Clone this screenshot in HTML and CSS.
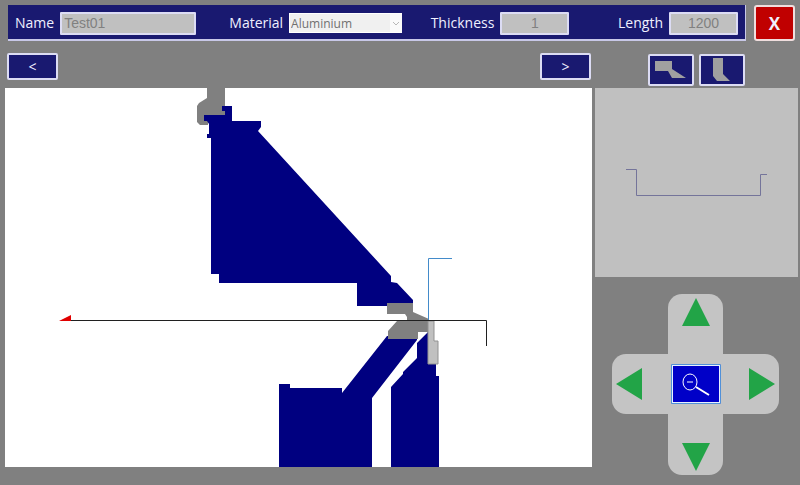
FILE: index.html
```html
<!DOCTYPE html>
<html lang="en">
<head>
<meta charset="utf-8">
<title>Bend profile</title>
<link rel="stylesheet" href="styles.css">
</head>
<body>
<header class="top">
  <form class="bar">
    <div class="field">
      <label for="name">Name</label>
      <input class="box wide" id="name" type="text" value="Test01" disabled>
    </div>
    <div class="field">
      <label for="material">Material</label>
      <span class="picker">
        <select id="material" disabled><option>Aluminium</option></select>
        <svg class="chevron" viewBox="0 0 12 18" aria-hidden="true"><path d="M3 8l3 3 3-3"/></svg>
      </span>
    </div>
    <div class="field">
      <label for="thickness">Thickness</label>
      <input class="box number" id="thickness" type="text" value="1" disabled>
    </div>
    <div class="field">
      <label for="length">Length</label>
      <input class="box number" id="length" type="text" value="1200" disabled>
    </div>
  </form>
  <button class="close" type="button">X</button>
</header>
<main class="work">
  <section class="left">
    <nav class="steps">
      <button class="btn step" type="button">&lt;</button>
      <button class="btn step" type="button">&gt;</button>
    </nav>
    <svg class="stage" viewBox="5 88 587 379" role="img" aria-label="Bending tools and sheet">
      <path class="clamp" d="M207 88H225V116H208V125H200L197 122V106L199 103L207 98Z"/>
      <path class="tool" d="M222 106H232V121H261V127L258 131L391 276V282L397 283L413 300V306H357V283H219V274H211V138H207V134H209V124L207 121H204V115H225V111H222Z"/>
      <path class="tool" d="M279 384H290V388H342V393L387 336H417V340L372 398V467H279Z"/>
      <path class="tool" d="M428 332V363H436V376H439V467H391V387L403 374V372L417 358V343Z"/>
      <path class="clamp" d="M387 303H413V312L429 319V332H418V339H388V331L397 321H407V317L405 314H387Z"/>
      <path class="plate" d="M428 321H434V341H438V364H428Z"/>
      <path class="fold" d="M428.500 320V258.500H452"/>
      <path class="sheet" d="M70 320.500H486.500V346"/>
      <path class="pointer" d="M59 321L71 315V321Z"/>
    </svg>
  </section>
  <aside class="right">
    <div class="modes">
      <button class="btn mode" type="button" aria-label="Upper tool"><svg viewBox="0 0 42 28"><path d="M5 5H22V13L36 22H22L18 15H5Z"/></svg></button>
      <button class="btn mode" type="button" aria-label="Lower tool"><svg viewBox="0 0 42 28"><path d="M12 2H22V18L29 25H16L12 20Z"/></svg></button>
    </div>
    <svg class="preview" viewBox="595 88 203 189" role="img" aria-label="Part profile"><path d="M626 169.500H636.500V195.500H760.500V174.500H767"/></svg>
    <div class="pad">
      <button class="arrow up" type="button" aria-label="Up"><svg viewBox="0 0 28 28"><path d="M14 0L28 28H0Z"/></svg></button>
      <button class="arrow side prev" type="button" aria-label="Left"><svg viewBox="0 0 26 32"><path d="M0 16L26 0V32Z"/></svg></button>
      <div class="hub">
        <button class="zoom" type="button" aria-label="Zoom out"><svg viewBox="0 0 46 36"><ellipse cx="17" cy="16" rx="7" ry="8"/><path d="M14 16H20"/><path class="handle" d="M23 21L36 29"/></svg></button>
      </div>
      <button class="arrow side next" type="button" aria-label="Right"><svg viewBox="0 0 26 32"><path d="M26 16L0 0V32Z"/></svg></button>
      <button class="arrow down" type="button" aria-label="Down"><svg viewBox="0 0 28 28"><path d="M0 0H28L14 28Z"/></svg></button>
    </div>
  </aside>
</main>
</body>
</html>
```
FILE: styles.css
```css
* { box-sizing: border-box; }

body {
  margin: 0;
  background: #808080;
  font-family: "Open Sans", "Noto Sans", sans-serif;
  color: #f0f0ff;
}

button { padding: 0; font: inherit; color: inherit; }
svg { display: block; }

.top {
  display: flex;
  gap: 8px;
  padding: 5px 5px 0 8px;
}

.bar {
  flex: 1;
  display: grid;
  grid-template-columns: 215fr 202fr 188fr auto;
  align-items: center;
  height: 36px;
  padding: 2px 7px 0;
  background: #191970;
  border: solid #c8c8e8;
  border-width: 0 1px 2px 0;
}

.field { display: flex; align-items: center; gap: 6px; }
.field label { font-size: 14px; line-height: 20px; }

.box {
  height: 23px;
  padding: 0 2px;
  border: 2px solid #dcdcf4;
  border-radius: 1px;
  background: #c0c0c0;
  color: #808080;
  font: 14px "Liberation Sans", sans-serif;
}
.wide { width: 136px; }
.number { width: 69px; text-align: center; }

.picker { display: grid; width: 113px; height: 20px; }
.picker > * { grid-area: 1 / 1; }
.picker select {
  appearance: none;
  padding: 0 1px;
  border: 1px solid #fff;
  border-radius: 0;
  background: #f0f0f0;
  color: #707070;
  opacity: 1;
  font: 12px "Open Sans", sans-serif;
}
.chevron {
  justify-self: end;
  align-self: center;
  width: 12px;
  height: 18px;
  background: #fafafa;
  fill: none;
  stroke: #b8b8b8;
  pointer-events: none;
}

.close {
  width: 41px;
  height: 36px;
  border: 2px solid #f0dede;
  border-radius: 3px;
  background: #c00000;
  font-size: 17px;
  font-weight: 700;
}

.work {
  display: grid;
  grid-template-columns: minmax(0, 587fr) minmax(0, 203fr);
  gap: 3px;
  padding: 12px 2px 0 5px;
}

.btn {
  border: 2px solid #dcdcf4;
  border-radius: 2px;
  background: #191970;
}

.steps {
  display: flex;
  justify-content: space-between;
  height: 35px;
  padding: 0 1px 0 2px;
}
.step { width: 51px; height: 27px; font-size: 14px; line-height: 20px; }

.stage { width: 100%; background: #fff; }
.clamp { fill: #808080; }
.tool { fill: #000080; }
.plate { fill: #c0c0c0; stroke: #929292; }
.fold { fill: none; stroke: #438bca; }
.sheet { fill: none; stroke: #202020; }
.pointer { fill: #e00000; }

.modes {
  display: flex;
  justify-content: center;
  gap: 5px;
  height: 35px;
  padding-top: 1px;
}
.mode { width: 46px; height: 32px; }
.mode svg { width: 100%; height: 100%; fill: #a0a0a0; }

.preview { width: 100%; background: #c0c0c0; }
.preview path { fill: none; stroke: #74749a; }

.pad {
  display: grid;
  grid-template-columns: 56px 55px 56px;
  grid-template-rows: 60px 60px 61px;
  justify-content: center;
  margin: 17px 2px 10px 0;
}
.arrow {
  display: flex;
  justify-content: center;
  border: 0;
  background: #c4c4c4;
  fill: #22a447;
}
.arrow svg { width: 28px; height: 28px; }
.side svg { width: 26px; height: 32px; }
.side { align-items: center; }
.up { grid-column: 2; padding-top: 4px; border-radius: 14px 14px 0 0; }
.down { grid-column: 2; align-items: end; padding-bottom: 4px; border-radius: 0 0 14px 14px; }
.prev { grid-column: 1; justify-content: start; padding-left: 4px; border-radius: 14px 0 0 14px; }
.next { justify-content: end; padding-right: 4px; border-radius: 0 14px 14px 0; }

.hub {
  display: grid;
  place-items: center;
  background: #c4c4c4;
}
.zoom {
  display: grid;
  place-items: center;
  width: 50px;
  height: 40px;
  border: 1px solid #5090d8;
  border-radius: 1px;
  background: #0000c8;
  box-shadow: inset 0 0 0 1px #e8f0ff;
  fill: none;
  stroke: #fff;
}
.zoom svg { width: 46px; height: 36px; }
.handle { stroke-width: 2; }
```
